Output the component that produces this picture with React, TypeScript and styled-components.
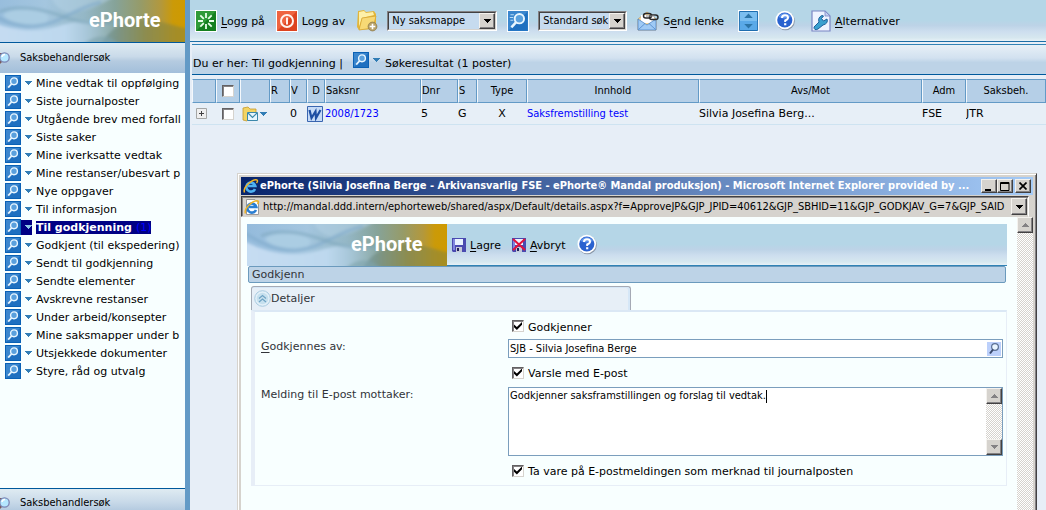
import React from 'react';
import styled, { createGlobalStyle, css } from 'styled-components';

const wide = "'DejaVu Sans', Verdana, sans-serif";
const narrow = "'DejaVu Sans Condensed', Tahoma, sans-serif";

const GlobalStyle = createGlobalStyle`
  *, *::before, *::after { box-sizing: border-box; }
  html, body, #root { height: 100%; }
  body { margin: 0; overflow: hidden; font: 11px/14px ${wide}; color: #000; background: #e7eef7; }
  button, input, select, textarea { font: inherit; color: inherit; margin: 0; padding: 0; border: 0; border-radius: 0; background: none; }
  a { color: inherit; text-decoration: none; }
  svg { display: block; flex: none; }
  u { text-underline-offset: 2px; }
`;

const toolbarFill = css`
  background: linear-gradient(#b5d6e7 0 50%, #bdd3e7 62%, #cedfef 78%, #d6e7ef 92%, #e7f1f7);
`;
const raised = css`
  background: #d6d3ce;
  border: 1px solid;
  border-color: #f4f2ee #424142 #424142 #f4f2ee;
  box-shadow: inset -1px -1px #848284;
`;
const dither = css`
  background: repeating-conic-gradient(#d6d3ce 0 25%, #ffffff 0 50%) 0 0 / 2px 2px;
`;

/* ---------- page frame ---------- */
const Page = styled.div`
  position: relative;
  display: flex;
  height: 100%;
  overflow: hidden;
`;
const Sidebar = styled.aside`
  flex: none;
  width: 190px;
  display: flex;
  flex-direction: column;
  overflow: hidden;
  border-right: 5px solid #639ac6;
  background: #f8ffff;
`;
const BannerSlot = styled.div`
  flex: none;
  display: flex;
  justify-content: flex-end;
`;
const SideHeading = styled.h2`
  flex: none;
  display: flex;
  align-items: center;
  gap: 10px;
  height: 31px;
  margin: 0;
  padding: 0;
  border-top: 1px solid #00599c;
  font: 11px/14px ${narrow};
  background: linear-gradient(#dfebf2, #c9dae9 45%, #b5cbe0 60%, #a3bfda);
`;
const SideFooter = styled(SideHeading)`
  height: 22px;
  padding: 6px 0 0;
  background: linear-gradient(#dfebf2, #c9dae9 60%, #b5cbe0);
`;
const SideList = styled.ul`
  flex: 1;
  min-height: 0;
  margin: 0;
  padding: 1px 0 0;
  list-style: none;
  overflow: hidden;
`;
const SideItem = styled.li<{ $selected?: boolean }>`
  display: flex;
  align-items: center;
  height: 18px;
  padding-left: 5px;
  white-space: nowrap;
  a {
    display: block;
    margin-left: 4px;
    line-height: 13px;
    font-weight: ${p => (p.$selected ? 'bold' : 'normal')};
    color: ${p => (p.$selected ? '#fff' : '#000')};
    background: ${p => (p.$selected ? '#000084' : 'none')};
  }
`;
const Count = styled.span`
  margin-left: 4px;
  font-weight: normal;
  color: #0000ff;
`;
const ArrowButton = styled.button<{ $selected?: boolean }>`
  display: grid;
  align-items: center;
  justify-items: start;
  width: 11px;
  height: 15px;
  padding-left: 3px;
  background: ${p => (p.$selected ? '#000084' : 'none')};
`;

/* ---------- main column ---------- */
const Main = styled.main`
  flex: 1;
  min-width: 0;
  display: flex;
  flex-direction: column;
`;
const Toolbar = styled.div`
  flex: none;
  display: flex;
  align-items: center;
  height: 42px;
  padding-left: 5px;
  border-bottom: 1px solid #1c6ea6;
  white-space: nowrap;
  ${toolbarFill}
`;
const ToolButton = styled.button<{ $gap?: number }>`
  display: flex;
  align-items: center;
  gap: 4px;
  margin-right: ${p => p.$gap ?? 11}px;
  white-space: nowrap;
  span { padding-top: 2px; }
`;
const SelectFrame = styled.label<{ $width: number }>`
  position: relative;
  display: block;
  width: ${p => p.$width}px;
  margin-right: 10px;
  border: 1px solid;
  border-color: #848284 #fff #fff #848284;
  select {
    display: block;
    width: 100%;
    height: 18px;
    padding-left: 3px;
    border: 1px solid;
    border-color: #424142 #d6d3ce #d6d3ce #424142;
    appearance: none;
    font: 11px/14px ${narrow};
    background: #c6dbef;
  }
`;
const SelectArrow = styled.span`
  position: absolute;
  top: 1px;
  right: 1px;
  bottom: 1px;
  width: 16px;
  display: grid;
  place-items: center;
  pointer-events: none;
  ${raised}
`;
const Crumbs = styled.nav`
  flex: none;
  display: flex;
  align-items: center;
  height: 31px;
  margin: 2px 0 0 2px;
  padding: 8px 0 0 1px;
  border-top: 1px solid #3182b5;
  border-bottom: 1px solid #00599c;
  white-space: nowrap;
  background: linear-gradient(#e7f0f7, #d2e1f0 45%, #bdd3e7 60%, #bdd3e7);
`;
const CrumbMenu = styled.button`
  display: flex;
  align-items: center;
  gap: 3px;
  margin: 0 5px 8px 10px;
`;
const Results = styled.table`
  width: calc(100% - 2px);
  margin: 4px 0 0 2px;
  border-collapse: separate;
  border-spacing: 0;
  table-layout: fixed;
  th, td { padding: 0; white-space: nowrap; overflow: hidden; }
  th {
    height: 24px;
    border: 1px solid #639ac6;
    border-left: 1px solid #f4f8fc;
    font: 11px/14px ${narrow};
    background: #b5cfe7;
  }
  td { height: 22px; border-bottom: 1px solid #cee3f1; background: #e7eff7; }
`;
const Th = styled.th<{ $left?: boolean }>`
  text-align: ${p => (p.$left ? 'left' : 'center')};
`;
const Td = styled.td<{ $center?: boolean; $tahoma?: boolean }>`
  text-align: ${p => (p.$center ? 'center' : 'left')};
  font-family: ${p => (p.$tahoma ? narrow : wide)};
  a { color: #0000ff; }
`;
const CellRow = styled.div<{ $pad?: number }>`
  display: flex;
  align-items: center;
  gap: 1px;
  padding-left: ${p => p.$pad ?? 0}px;
`;
const Check = styled.input.attrs({ type: 'checkbox' })`
  display: inline-grid;
  place-content: center;
  flex: none;
  width: 12px;
  height: 12px;
  appearance: none;
  vertical-align: middle;
  background: #fff;
  border: 1px solid;
  border-color: #636163 #d6d3ce #d6d3ce #636163;
  box-shadow: inset 1px 1px #848284;
  &:checked::before {
    content: '';
    width: 8px;
    height: 8px;
    background: #000;
    clip-path: polygon(0 30%, 36% 62%, 100% 0, 100% 34%, 36% 100%, 0 66%);
  }
`;

/* ---------- popup window ---------- */
const Popup = styled.section`
  position: absolute;
  left: 237px;
  right: 9px;
  top: 173px;
  bottom: 0;
  display: flex;
  flex-direction: column;
  padding: 3px 3px 0 3px;
  border-left: 1px solid #d6d3ce;
  border-top: 1px solid #d6d3ce;
  border-right: 1px solid #424142;
  box-shadow: inset 1px 1px #fff, inset -1px 0 #848284;
  background: #d6d3ce;
`;
const TitleBar = styled.header`
  flex: none;
  display: flex;
  align-items: center;
  gap: 1px;
  height: 18px;
  padding: 0 2px;
  color: #fff;
  background: linear-gradient(90deg, #08246b, #a5cbf7);
  h1 { flex: 1; min-width: 0; margin: 0; font: bold 11px/14px ${narrow}; white-space: nowrap; overflow: hidden; }
`;
const WinButtons = styled.div`
  display: flex;
  button { display: grid; place-items: center; width: 16px; height: 14px; ${raised} }
  button:last-child { margin-left: 2px; }
`;
const AddressBar = styled.div`
  flex: none;
  display: flex;
  align-items: center;
  gap: 3px;
  height: 21px;
  margin: 1px 4px 0 0;
  padding: 0 1px 0 2px;
  border: 1px solid;
  border-color: #424142 #fff #d6d3ce #424142;
  box-shadow: inset 1px 1px #848284;
  input { flex: 1; min-width: 0; font-family: ${narrow}; }
`;
const AddressArrow = styled.button`
  display: grid;
  place-items: center;
  width: 16px;
  height: 17px;
  margin-left: -3px;
  ${raised}
`;
const Client = styled.div`
  flex: 1;
  min-height: 0;
  display: flex;
  overflow: hidden;
`;
const Document = styled.div`
  flex: 1;
  min-width: 0;
  padding: 7px 10px 0 6px;
  background: #f8ffff;
`;
const Track = styled.div`
  flex: none;
  display: flex;
  flex-direction: column;
  justify-content: space-between;
  width: 16px;
  ${dither}
  button { display: grid; place-items: center; width: 16px; height: 16px; ${raised} }
`;
const DocHeader = styled.div`
  display: flex;
  height: 42px;
`;
const DocTools = styled.div`
  flex: 1;
  display: flex;
  align-items: center;
  padding-left: 5px;
  border-bottom: 1px solid #3182b5;
  ${toolbarFill}
`;
const Strip = styled.h2`
  height: 17px;
  margin: 0 1px;
  padding-left: 3px;
  border: 1px solid #6b9abd;
  border-radius: 2px;
  font: 11px/16px ${wide};
  color: #313439;
  background: #bdd3e7;
`;
const Tab = styled.h3`
  display: flex;
  align-items: center;
  width: 50%;
  height: 24px;
  margin: 3px 0 0 4px;
  padding-left: 2px;
  border: 1px solid #a5aab5;
  border-bottom: 0;
  border-radius: 3px 3px 0 0;
  font: 11px/14px ${wide};
  color: #313439;
  background: #e7eff7;
  box-shadow: inset -2px 1px #d6e7f7;
`;
const Panel = styled.form`
  display: grid;
  grid-template-columns: 247px 1fr;
  margin-left: 4px;
  padding: 1px 3px 0 6px;
  border: 1px solid #e7eef7;
  border-top: 2px solid #dbe8f5;
  border-left-width: 4px;
`;
const CheckLabel = styled.label<{ $height: number }>`
  grid-column: 2;
  display: flex;
  align-items: center;
  gap: 4px;
  height: ${p => p.$height}px;
  padding-left: 4px;
  span { padding-top: 3px; }
`;
const FieldLabel = styled.label`
  padding-top: 1px;
  color: #313439;
`;
const LookupBox = styled.div`
  display: flex;
  align-items: center;
  height: 19px;
  padding: 0 1px;
  border: 1px solid #7b9ebd;
  background: #fff;
  input { flex: 1; min-width: 0; font-family: ${narrow}; }
`;
const MessageBox = styled.div`
  position: relative;
  display: flex;
  height: 69px;
  border: 1px solid #7b9ebd;
  background: #fff;
  textarea { flex: 1; min-width: 0; padding: 1px; resize: none; outline: 0; overflow: hidden; font-family: ${narrow}; }
`;
const Caret = styled.span`
  position: absolute;
  left: 257px;
  top: 2px;
  width: 1px;
  height: 13px;
  background: #000;
`;

/* ---------- drawings ---------- */
const Triangle = ({ up, w = 7, color = '#000' }: { up?: boolean; w?: number; color?: string }) => (
  <svg width={w} height={Math.ceil(w / 2)} viewBox="0 0 8 4" preserveAspectRatio="none" shapeRendering="crispEdges">
    <path d={up ? 'M0 4L4 0L8 4Z' : 'M0 0H8L4 4Z'} fill={color} />
  </svg>
);

const Banner = () => (
  <svg width="200" height="42" viewBox="0 0 200 42" role="img" aria-label="ePhorte">
    <defs>
      <linearGradient id="bn" x1="0" x2="1">
        <stop offset="0" stopColor="#94bbdc" />
        <stop offset=".3" stopColor="#a4c6df" />
        <stop offset=".5" stopColor="#94b7c6" />
        <stop offset=".65" stopColor="#86a399" />
        <stop offset=".78" stopColor="#969b68" />
        <stop offset=".88" stopColor="#b3983c" />
        <stop offset=".94" stopColor="#cb9a08" />
        <stop offset="1" stopColor="#ce9a00" />
      </linearGradient>
      <linearGradient id="bl" x1="0" y1="0" x2="1" y2="0">
        <stop offset="0" stopColor="#c6dcf2" />
        <stop offset=".6" stopColor="#bdd8ee" />
        <stop offset="1" stopColor="#a9c8da" stopOpacity="0" />
      </linearGradient>
      <linearGradient id="bg" x1="0" y1="0" x2="1" y2="0">
        <stop offset="0" stopColor="#6f95a0" />
        <stop offset=".5" stopColor="#87884a" />
        <stop offset="1" stopColor="#9d8a28" />
      </linearGradient>
      <filter id="soft" x="-10%" y="-30%" width="120%" height="160%"><feGaussianBlur stdDeviation="1.8" /></filter>
      <clipPath id="bc"><path d="M0 0H200V42H0Z" /></clipPath>
    </defs>
    <path d="M0 0H200V42H0Z" fill="url(#bn)" />
    <g clipPath="url(#bc)"><g filter="url(#soft)" fill="none">
      <path d="M-4 16C16 28 44 34 70 27C92 20 112 20 136 26L124 48H-4Z" fill="url(#bl)" />
      <path d="M66 -4H130C118 4 100 12 84 13C74 10 68 4 66 -4Z" fill="#b4d2e5" opacity=".55" />
      <path d="M18 15C24 8 52 8 62 15C67 22 54 26 42 25C30 23 22 20 18 15Z" fill="#abcde3" />
      <path d="M-4 8C14 19 28 27 50 26C76 24 84 10 116 2" stroke="#80abcc" strokeWidth="3" opacity=".7" />
      <path d="M14 12C30 5 54 8 74 15C96 24 114 26 134 22" stroke="#7da6bd" strokeWidth="3" opacity=".6" />
      <path d="M116 46C122 28 140 22 158 20C176 20 188 26 204 29V46Z" fill="url(#bg)" opacity=".75" />
      <path d="M96 46C110 34 122 32 136 46Z" fill="#7fa3ab" opacity=".6" />
    </g></g>
    <text x="104" y="27" fill="#fff" fontSize="20" fontWeight="bold" fontFamily="Roboto, 'Arial Narrow', sans-serif">ePhorte</text>
  </svg>
);

const SearchTile = ({ size = 16, lines }: { size?: number; lines?: boolean }) => (
  <svg width={size} height={size} viewBox="0 0 16 16">
    <path d="M0 0H16V16H0Z" fill={lines ? '#fff' : '#0a61b5'} />
    <path d={lines ? 'M.7 .7H15.3V15.3H.7Z' : 'M1 1H15V15H1Z'} fill="#3a86ce" />
    <path d="M1 15L15 1V15Z" fill="#1f70c0" />
    <circle cx="9" cy="6.3" r="3.4" fill="#5aa0dd" stroke="#e8f6ff" strokeWidth="1.4" />
    <path d="M6.5 9L3.2 12.6" stroke="#e8f6ff" strokeWidth="1.8" />
    {lines && <path d="M2.5 3.5H5M2 5.5H4.6M2.5 7.5H4.6" stroke="#b8dcf7" strokeWidth=".8" />}
  </svg>
);

const SideLens = () => (
  <svg width="10" height="14" viewBox="0 0 10 14">
    <path d="M0 2H2V5L1 6V9L2 11L0 13Z" fill="#7b5a5a" />
    <circle cx="4.500" cy="6.500" r="4.700" fill="#b5e7ff" stroke="#7b86b5" strokeWidth="1.300" />
    <path d="M2 6A3 3 0 0 1 5 3.500" stroke="#fff" strokeWidth="1.500" fill="none" />
  </svg>
);

const LogOnIcon = () => (
  <svg width="22" height="22" viewBox="0 0 22 22">
    <path d="M0 0H22V22H0Z" fill="#fff" />
    <path d="M1 1H21V21H1Z" fill="#15801f" />
    <path d="M1 21L21 1H1Z" fill="#2f9a37" />
    <path d="M11 3V8M11 14V19M3 11H8M14 11H19M5.3 5.3L8.8 8.8M13.2 13.2L16.7 16.7M5.3 16.7L8.8 13.2M13.2 8.8L16.7 5.3" stroke="#e9ffe9" strokeWidth="1.8" />
  </svg>
);
const LogOffIcon = () => (
  <svg width="22" height="22" viewBox="0 0 22 22">
    <path d="M0 0H22V22H0Z" fill="#fff" />
    <path d="M1 1H21V21H1Z" fill="#dd4420" />
    <path d="M1 21L21 1H1Z" fill="#ef6440" />
    <circle cx="11" cy="11" r="6" fill="none" stroke="#fff3ee" strokeWidth="2" />
    <path d="M11 7.5V14.5" stroke="#fff3ee" strokeWidth="2" />
  </svg>
);
const NewFolderIcon = () => (
  <svg width="22" height="23" viewBox="0 0 22 23">
    <path d="M2 2L8 1L10 3L18 2L20 5V17L17 20L3 21L1 18Z" fill="#e3b63a" />
    <path d="M3 3L8 2L10 4L17 3L18 6L6 9L3 18Z" fill="#fdf0a8" />
    <path d="M6 9L20 7L17 19L3 21Z" fill="#f7d975" stroke="#d2a02c" strokeWidth=".7" />
    <circle cx="16.5" cy="17.5" r="4.4" fill="#b9a36a" stroke="#8d7a48" strokeWidth=".8" />
    <path d="M16.5 14.7V20.3M13.7 17.5H19.3" stroke="#fff" strokeWidth="1.6" />
  </svg>
);
const MailIcon = () => (
  <svg width="22" height="20" viewBox="0 0 22 20">
    <path d="M1 8L10 1L19 8V19H1Z" fill="#f6d79a" stroke="#c4995a" strokeWidth=".7" />
    <path d="M4 4H17V12H4Z" fill="#fff" />
    <path d="M1 8L10 14L19 8V19H1Z" fill="#9fcaf5" stroke="#4f87c6" strokeWidth=".8" />
    <path d="M1.5 18.5L8 12.5M18.5 18.5L12 12.5" stroke="#4f87c6" strokeWidth=".8" />
    <rect x="6.5" y="2.5" width="8" height="4.6" rx="2.3" fill="none" stroke="#2a2a2a" strokeWidth="1.5" />
    <rect x="12.5" y="4" width="8.5" height="4.6" rx="2.3" fill="none" stroke="#2a2a2a" strokeWidth="1.5" />
    <path d="M9 5H17.5" stroke="#888" strokeWidth="1" />
  </svg>
);
const UpDownIcon = () => (
  <svg width="21" height="22" viewBox="0 0 22 22" preserveAspectRatio="none">
    <path d="M0 0H22V22H0Z" fill="#fff" />
    <path d="M1.5 1.5H20.5V20.5H1.5Z" fill="#7bbef0" stroke="#1a69ad" />
    <path d="M2 11H20V20H2Z" fill="#5aa9e8" />
    <path d="M6.500 8L11 3.500L15.500 8ZM6.500 14L11 18.500L15.500 14Z" fill="#2d75a8" />
  </svg>
);
const HelpIcon = () => (
  <svg width="20" height="21" viewBox="0 0 20 21">
    <circle cx="10.500" cy="11" r="9.300" fill="#8b97a8" />
    <circle cx="9.800" cy="10" r="9.300" fill="#fff" />
    <circle cx="9.800" cy="10" r="7.600" fill="#2a62cf" />
    <path d="M3.500 7A7 7 0 0 1 16 7Q10 10 3.500 7Z" fill="#5e92ea" />
    <path d="M7 8Q7 5.300 10 5.300Q13 5.300 13 7.700Q13 9.300 10.200 10.400V12" fill="none" stroke="#fff" strokeWidth="2" />
    <path d="M9.100 13.200H11.300V15.300H9.100Z" fill="#fff" />
  </svg>
);
const WrenchIcon = () => (
  <svg width="20" height="22" viewBox="0 0 20 22">
    <path d="M1 1H14L19 6V21H1Z" fill="#eef3ff" stroke="#7b86c4" strokeWidth="1.200" />
    <path d="M14 1V6H19Z" fill="#c4cff0" stroke="#7b86c4" strokeWidth=".8" />
    <path d="M3 17L8 12Q6.500 7.500 11 5.500L12.500 6L10.500 8.500L12.500 11L16 9Q17.500 13.500 12 15L7 19Q3 21 3 17Z" fill="#3aa0cf" stroke="#1c5f9a" strokeWidth="1" />
  </svg>
);
const FolderMailIcon = () => (
  <svg width="16" height="16" viewBox="0 0 16 16">
    <path d="M1 2L6 1L8 3H14V6L5 15L1 14Z" fill="#f3d463" stroke="#c69b2c" strokeWidth=".8" />
    <path d="M5.500 6.500H15.500V14.500H5.500Z" fill="#e6f6ff" stroke="#3b88ab" />
    <path d="M6 7L10.500 11.500L15 7" fill="none" stroke="#3b88ab" strokeWidth="1.200" />
  </svg>
);
const PlusBox = () => (
  <svg width="11" height="11" viewBox="0 0 11 11">
    <path d="M.5 .5H10.500V10.500H.5Z" fill="#efefef" stroke="#a5a6a5" />
    <path d="M3 5.500H8M5.500 3V8" stroke="#424142" />
  </svg>
);
const WordIcon = () => (
  <svg width="16" height="16" viewBox="0 0 16 16">
    <path d="M.5 .5H15.500V15.500H.5Z" fill="#c6dbf7" stroke="#3a66b0" />
    <path d="M2.500 4L4.500 12L8.500 5.500L9 12L13.500 4" fill="none" stroke="#1f4fa3" strokeWidth="2.200" />
  </svg>
);
const IeIcon = ({ page }: { page?: boolean }) => (
  <svg width="16" height="16" viewBox="0 0 16 16">
    {page && <path d="M2.500 .5H11L14.500 4V15.500H2.500Z" fill="#fff" stroke="#9a9a9a" />}
    <path d="M12 11A4.500 4.500 0 1 1 12.300 8H5" fill="none" stroke={page ? '#2a7fd2' : '#4db1f2'} strokeWidth="2.600" />
    <path d="M1.500 14.500Q0 11 5 6Q11 .8 14 2Q15.200 3 13.500 5" fill="none" stroke="#f0b428" strokeWidth="1.500" />
  </svg>
);
const DiskIcon = ({ cancel }: { cancel?: boolean }) => (
  <svg width="14" height="14" viewBox="0 0 14 14">
    <path d="M0 0H14V14H1L0 13Z" fill="#4a4ab0" />
    <path d="M1 1H3V12H1Z" fill="#7f86de" />
    <path d="M3 1H11V7H3Z" fill="#e8f2ff" />
    <path d="M4 9H10V14H4Z" fill="#c4c8d8" />
    <path d="M5 10H7V13H5Z" fill="#22225c" />
    {cancel && <path d="M1 1L13 12M13 1L1 12" stroke="#e3123c" strokeWidth="2" />}
  </svg>
);
const CollapseIcon = () => (
  <svg width="17" height="17" viewBox="0 0 17 17">
    <circle cx="8.500" cy="8.500" r="7.800" fill="#e3f0f8" stroke="#a9cbe0" />
    <circle cx="8.500" cy="8.500" r="5.800" fill="#c6e0ee" />
    <path d="M5 8.500L8.500 5.500L12 8.500M5 12L8.500 9L12 12" fill="none" stroke="#6fa3c4" strokeWidth="1.200" />
  </svg>
);
const LookupIcon = () => (
  <svg width="14" height="14" viewBox="0 0 14 14">
    <path d="M0 0H14V14H0Z" fill="#bcd0fb" />
    <circle cx="8" cy="5" r="3.400" fill="#e8f4ff" stroke="#5a6f94" strokeWidth="1.200" />
    <path d="M6 7.500L3 11.500" stroke="#39486a" strokeWidth="2" />
  </svg>
);
const MinimizeGlyph = () => (<svg width="10" height="9" viewBox="0 0 10 9"><path d="M1 7H7V9H1Z" fill="#000" /></svg>);
const MaximizeGlyph = () => (<svg width="10" height="9" viewBox="0 0 10 9"><path d="M.5 .5H9V8.500H.5ZM.5 1.500H9" fill="none" stroke="#000" /></svg>);
const CloseGlyph = () => (<svg width="8" height="8" viewBox="0 0 8 8"><path d="M.5 .5L7.500 7.500M7.500 .5L.5 7.500" stroke="#000" strokeWidth="1.700" /></svg>);

/* ---------- content ---------- */
const shortcuts = [
  'Mine vedtak til oppfølging', 'Siste journalposter', 'Utgående brev med forfall', 'Siste saker',
  'Mine iverksatte vedtak', 'Mine restanser/ubesvart p', 'Nye oppgaver', 'Til informasjon',
  'Til godkjenning', 'Godkjent (til ekspedering)', 'Sendt til godkjenning', 'Sendte elementer',
  'Avskrevne restanser', 'Under arbeid/konsepter', 'Mine saksmapper under b',
  'Utsjekkede dokumenter', 'Styre, råd og utvalg',
];
const columnWidths = [24, 24, 30, 20, 17, 18, 96, 37, 19, 50, 172, 223, 44];

export default function App() {
  return (
    <>
      <GlobalStyle />
      <Page>
        <Sidebar>
          <BannerSlot><Banner /></BannerSlot>
          <SideHeading><SideLens />Saksbehandlersøk</SideHeading>
          <SideList>
            {shortcuts.map(name => {
              const selected = name === 'Til godkjenning';
              return (
                <SideItem key={name} $selected={selected}>
                  <SearchTile />
                  <ArrowButton $selected={selected} aria-label={`Meny for ${name}`}><Triangle w={8} color={selected ? '#8cc6e7' : '#317db5'} /></ArrowButton>
                  <a href="#">{name}{selected && <Count>(1)</Count>}</a>
                </SideItem>
              );
            })}
          </SideList>
          <SideFooter><SideLens />Saksbehandlersøk</SideFooter>
        </Sidebar>

        <Main>
          <Toolbar>
            <ToolButton><LogOnIcon /><span><u>L</u>ogg på</span></ToolButton>
            <ToolButton><LogOffIcon /><span>Logg av</span></ToolButton>
            <ToolButton $gap={9} aria-label="Ny mappe"><NewFolderIcon /></ToolButton>
            <SelectFrame $width={110}>
              <select aria-label="Opprett"><option>Ny saksmappe</option></select>
              <SelectArrow><Triangle /></SelectArrow>
            </SelectFrame>
            <ToolButton $gap={9} aria-label="Søk"><SearchTile size={22} lines /></ToolButton>
            <SelectFrame $width={89}>
              <select aria-label="Søketype"><option>Standard søk</option></select>
              <SelectArrow><Triangle /></SelectArrow>
            </SelectFrame>
            <ToolButton $gap={14}><MailIcon /><span>S<u>e</u>nd lenke</span></ToolButton>
            <ToolButton $gap={16} aria-label="Bytt visning"><UpDownIcon /></ToolButton>
            <ToolButton $gap={16} aria-label="Hjelp"><HelpIcon /></ToolButton>
            <ToolButton><WrenchIcon /><span><u>A</u>lternativer</span></ToolButton>
          </Toolbar>

          <Crumbs>
            <span>Du er her: Til godkjenning |</span>
            <CrumbMenu aria-label="Søkemeny"><SearchTile /><Triangle w={8} color="#317db5" /></CrumbMenu>
            <span>Søkeresultat (1 poster)</span>
          </Crumbs>

          <Results>
            <colgroup>
              {columnWidths.map((w, i) => <col key={i} width={w} />)}
              <col />
            </colgroup>
            <thead>
              <tr>
                <Th /><Th><Check aria-label="Velg alle" /></Th><Th /><Th $left>R</Th><Th $left>V</Th><Th>D</Th>
                <Th $left>Saksnr</Th><Th $left>Dnr</Th><Th $left>S</Th><Th>Type</Th><Th>Innhold</Th>
                <Th>Avs/Mot</Th><Th>Adm</Th><Th>Saksbeh.</Th>
              </tr>
            </thead>
            <tbody>
              <tr>
                <Td><CellRow $pad={4}><PlusBox /></CellRow></Td>
                <Td $center><Check aria-label="Velg post" /></Td>
                <Td><CellRow $pad={2}><FolderMailIcon /><Triangle w={8} color="#317db5" /></CellRow></Td>
                <Td />
                <Td>0</Td>
                <Td><WordIcon /></Td>
                <Td $tahoma><a href="#">2008/1723</a></Td>
                <Td>5</Td>
                <Td>G</Td>
                <Td $center>X</Td>
                <Td $tahoma><a href="#">Saksfremstilling test</a></Td>
                <Td>Silvia Josefina Berg...</Td>
                <Td>FSE</Td>
                <Td>JTR</Td>
              </tr>
            </tbody>
          </Results>
        </Main>

        <Popup>
          <TitleBar>
            <IeIcon />
            <h1>ePhorte (Silvia Josefina Berge - Arkivansvarlig FSE - ePhorte® Mandal produksjon) - Microsoft Internet Explorer provided by ...</h1>
            <WinButtons>
              <button aria-label="Minimer"><MinimizeGlyph /></button>
              <button aria-label="Maksimer"><MaximizeGlyph /></button>
              <button aria-label="Lukk"><CloseGlyph /></button>
            </WinButtons>
          </TitleBar>
          <AddressBar>
            <IeIcon page />
            <input aria-label="Adresse" readOnly value="http://mandal.ddd.intern/ephorteweb/shared/aspx/Default/details.aspx?f=ApproveJP&GJP_JPID=40612&GJP_SBHID=11&GJP_GODKJAV_G=7&GJP_SAID" />
            <AddressArrow aria-label="Vis adresser"><Triangle /></AddressArrow>
          </AddressBar>
          <Client>
            <Document>
              <DocHeader>
                <Banner />
                <DocTools>
                  <ToolButton><DiskIcon /><span><u>L</u>agre</span></ToolButton>
                  <ToolButton><DiskIcon cancel /><span><u>A</u>vbryt</span></ToolButton>
                  <ToolButton aria-label="Hjelp"><HelpIcon /></ToolButton>
                </DocTools>
              </DocHeader>
              <Strip>Godkjenn</Strip>
              <Tab><CollapseIcon />Detaljer</Tab>
              <Panel>
                <CheckLabel $height={26}><Check defaultChecked /><span>Godkjenner</span></CheckLabel>
                <FieldLabel htmlFor="approver"><u>G</u>odkjennes av:</FieldLabel>
                <LookupBox>
                  <input id="approver" defaultValue="SJB - Silvia Josefina Berge" />
                  <button type="button" aria-label="Slå opp"><LookupIcon /></button>
                </LookupBox>
                <CheckLabel $height={29}><Check defaultChecked /><span>Varsle med E-post</span></CheckLabel>
                <FieldLabel htmlFor="message">Melding til E-post mottaker:</FieldLabel>
                <MessageBox>
                  <textarea id="message" defaultValue="Godkjenner saksframstillingen og forslag til vedtak." />
                  <Caret />
                  <Track>
                    <button type="button" aria-label="Rull opp"><Triangle up color="#848284" /></button>
                    <button type="button" aria-label="Rull ned"><Triangle color="#848284" /></button>
                  </Track>
                </MessageBox>
                <CheckLabel $height={29}><Check defaultChecked /><span>Ta vare på E-postmeldingen som merknad til journalposten</span></CheckLabel>
              </Panel>
            </Document>
            <Track><button aria-label="Rull siden opp"><Triangle up color="#848284" /></button></Track>
          </Client>
        </Popup>
      </Page>
    </>
  );
}
